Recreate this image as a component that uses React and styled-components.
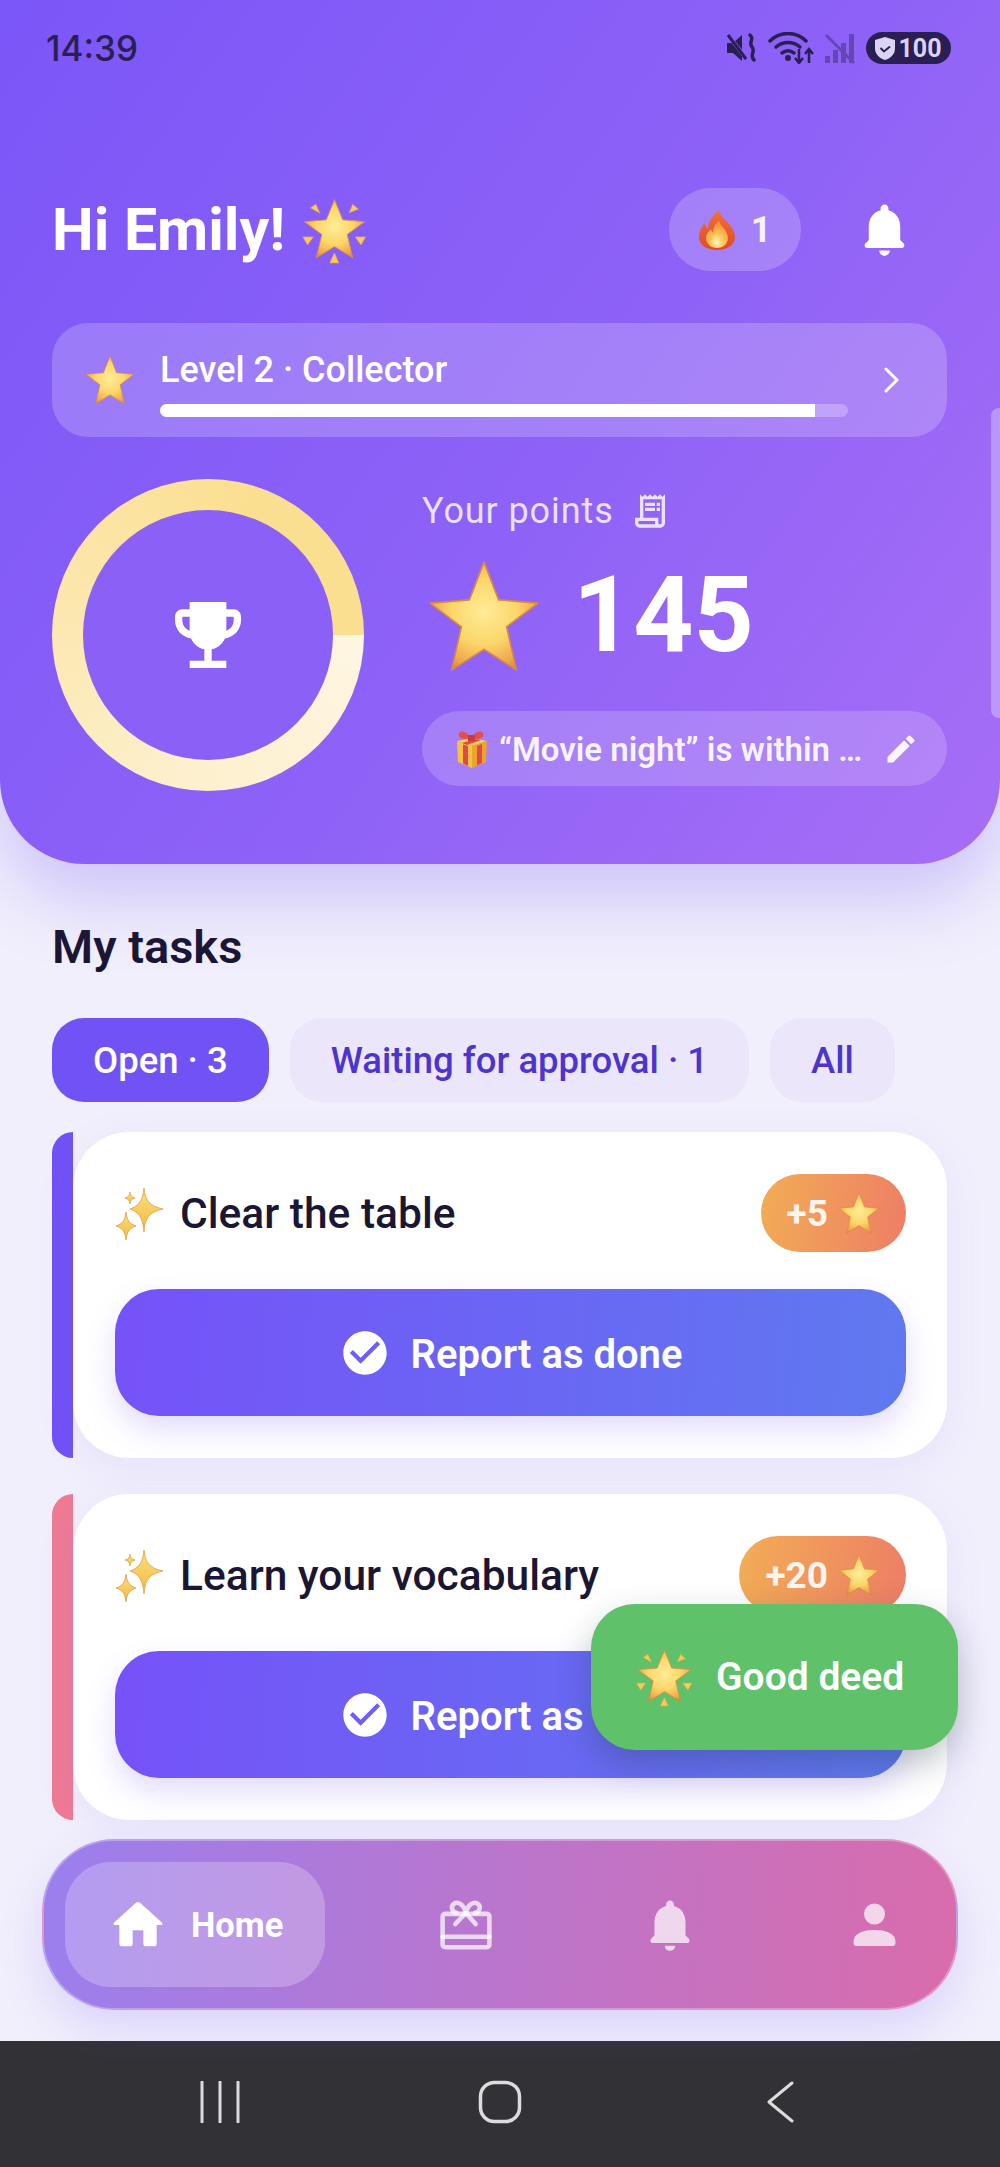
import React from "react";
import styled, { createGlobalStyle } from "styled-components";

const GlobalStyle = createGlobalStyle`
  html, body {
    margin: 0;
    padding: 0;
    overflow: hidden;
    background: #f1effc;
    font-family: Roboto, "Liberation Sans", sans-serif;
  }
  * { box-sizing: border-box; }
`;

const STAR_POINTS = "50,0 63.6,35 100,38 71,60 80,100 50,81 20,100 29,60 0,38 36.4,35";

// emoji are not available as a font here, so they are small drawings
const EmojiDefs = () => (
  <DefsHolder aria-hidden="true">
    <defs>
      <radialGradient id="starFill" cx="50%" cy="46%" r="60%">
        <stop offset="0%" stopColor="#ffec96" />
        <stop offset="50%" stopColor="#fbd76c" />
        <stop offset="85%" stopColor="#eda748" />
        <stop offset="100%" stopColor="#d9823a" />
      </radialGradient>
      <linearGradient id="fireOuter" x1="0" y1="0" x2="0" y2="1">
        <stop offset="0%" stopColor="#f0703a" />
        <stop offset="100%" stopColor="#e04a26" />
      </linearGradient>
      <radialGradient id="fireInner" cx="50%" cy="78%" r="62%">
        <stop offset="0%" stopColor="#fff6c8" />
        <stop offset="45%" stopColor="#fdc95a" />
        <stop offset="100%" stopColor="#f79a3a" />
      </radialGradient>
      <linearGradient id="sparkFill" x1="0" y1="0" x2="0" y2="1">
        <stop offset="0%" stopColor="#fde07a" />
        <stop offset="100%" stopColor="#f0b848" />
      </linearGradient>
    </defs>
  </DefsHolder>
);

const Star = ({ size, height }) => (
  <svg width={size} height={height || size} viewBox="-2 -2 104 104">
    <polygon points={STAR_POINTS} fill="url(#starFill)" stroke="#d98a3e" strokeWidth="1.500" strokeLinejoin="round" />
  </svg>
);

const GlowStar = ({ size }) => (
  <svg width={size} height={size} viewBox="38 42 196 196">
    <g transform="translate(50 52) scale(1.75 1.68)">
      <polygon points={STAR_POINTS} fill="url(#starFill)" stroke="#d98a3e" strokeWidth="1.500" strokeLinejoin="round" />
    </g>
    <g fill="#f8c95c" stroke="#e8a545" strokeWidth="2" strokeLinejoin="round">
      <polygon points="68,76 84,66 95,92" />
      <polygon points="180,90 190,66 206,80" />
      <polygon points="46,160 76,160 60,183" />
      <polygon points="197,160 227,160 214,183" />
      <polygon points="137,206 150,235 124,235" />
    </g>
  </svg>
);

const Fire = () => (
  <svg width="36" height="40" viewBox="0 0 36 40">
    <path d="M20 0c1 6 6 9 10 14 4 5 6 9 6 13 0 8-8 13-18 13S0 35 0 27c0-6 3-11 6-14 0 3 1 5 3 6 0-8 5-14 11-19z" fill="url(#fireOuter)" />
    <path d="M20 11c1 5 9 9 9 17 0 6-5 10-11 10S7 34 7 28c0-4 3-7 5-9 0 2 1 3 2 3 0-5 3-8 6-11z" fill="url(#fireInner)" />
  </svg>
);

const Sparkles = () => (
  <svg width="48" height="56" viewBox="0 0 48 56">
    <g fill="url(#sparkFill)" stroke="#dca040" strokeWidth="0.8" strokeLinejoin="round">
      <path d="M29 3c1 12 5 18 19 21-14 3-18 9-19 23-1-14-5-20-14-23 9-3 13-9 14-21z" />
      <path d="M11 27c1 9 4 12 10 14-6 2-9 5-10 14-1-9-4-12-10-14 6-2 9-5 10-14z" />
      <path d="M15 7c.5 4 2 5 5 6-3 1-4.500 2-5 6-.5-4-2-5-5-6 3-1 4.500-2 5-6z" />
    </g>
  </svg>
);

const Gift = () => (
  <svg width="36" height="38" viewBox="0 0 36 38">
    <path d="M17 8C13 1 7 0 5 3c-2 3 2 7 12 7 10 0 14-4 12-7-2-3-8-2-12 5z" fill="#e0504c" />
    <path d="M3 11l15-3 15 3-15 5z" fill="#f7cf55" />
    <path d="M3 11l15 5v22L4 32z" fill="#f7c244" />
    <path d="M33 11l-15 5v22l14-6z" fill="#eba52e" />
    <path d="M8 13l14-4 5 1-14 5zM9 14.500l5 1.500v20l-5-2.500zM23 16l5-2v19l-5 2.500z" fill="#dd4b46" />
    <path d="M14 5h7v6h-7z" fill="#c93a3a" />
  </svg>
);

const Icon = ({ d, size, fill = "currentColor" }) => (
  <svg width={size} height={size} viewBox="0 0 24 24" fill={fill}>
    <path d={d} />
  </svg>
);

const BELL = "M12 22c1.1 0 2-.9 2-2h-4c0 1.1.9 2 2 2zm6-6v-5c0-3.07-1.630-5.640-4.500-6.320V4c0-.83-.67-1.500-1.500-1.500s-1.500.67-1.500 1.500v.68C7.640 5.360 6 7.920 6 11v5l-1.290 1.290c-.63.63-.19 1.710.7 1.710h13.170c.89 0 1.340-1.080.71-1.710L18 16z";
const TROPHY = "M19 5h-2V3H7v2H5c-1.100 0-2 .9-2 2v1c0 2.550 1.920 4.630 4.390 4.940.63 1.500 1.980 2.630 3.610 2.960V19H7v2h10v-2h-4v-3.100c1.630-.33 2.980-1.460 3.610-2.960C19.080 12.630 21 10.550 21 8V7c0-1.100-.9-2-2-2zM5 8V7h2v3.820C5.840 10.400 5 9.300 5 8zm14 0c0 1.300-.84 2.400-2 2.820V7h2v1z";
const RECEIPT = "M19.500 3.500 18 2l-1.500 1.500L15 2l-1.500 1.500L12 2l-1.500 1.500L9 2 7.500 3.500 6 2v14H3v3c0 1.660 1.340 3 3 3h12c1.660 0 3-1.340 3-3V2l-1.500 1.500zM15 20H6c-.55 0-1-.45-1-1v-1h10v2zm4-1c0 .55-.45 1-1 1s-1-.45-1-1v-3H8V5h11v14zM9 7h6v2H9zM16 7h2v2h-2zM9 10h6v2H9zM16 10h2v2h-2z";
const EDIT = "M3 17.250V21h3.750L17.810 9.940l-3.750-3.750L3 17.250zM20.710 7.040c.39-.39.39-1.020 0-1.410l-2.340-2.340a.996.996 0 0 0-1.410 0l-1.830 1.830 3.750 3.750 1.830-1.830z";
const CHECK = "M12 2C6.480 2 2 6.480 2 12s4.480 10 10 10 10-4.480 10-10S17.520 2 12 2zm-2 15-5-5 1.410-1.410L10 14.170l7.590-7.590L19 8l-9 9z";
const HOME = "M10 19v-5h4v5c0 .55.45 1 1 1h3c.55 0 1-.45 1-1v-7h1.700c.46 0 .68-.57.33-.87L12.670 3.600c-.38-.34-.96-.34-1.340 0l-8.360 7.530c-.34.3-.13.87.33.87H5v7c0 .55.45 1 1 1h3c.55 0 1-.45 1-1z";

const tasks = [
  { title: "Clear the table", points: "+5", color: "#7152f5" },
  { title: "Learn your vocabulary", points: "+20", color: "#ee7a95" },
];

const App = () => {
  return (
    <Page>
      <GlobalStyle />
      <EmojiDefs />
      <Hero>
        <StatusBar>
          <Clock>14:39</Clock>
          <StatusIcons>
            <svg width="32" height="30" viewBox="0 0 32 30">
              <path d="M1 10h6l9-8v26l-9-8H1z" fill="#2a1f52" />
              <path d="M2 2l20 26" stroke="#8a60f8" strokeWidth="4" />
              <path d="M2 2l18 24" stroke="#2a1f52" strokeWidth="3" />
              <path d="M24 2c5 4-2 7 2 12s-3 8 2 13" stroke="#2a1f52" strokeWidth="3.500" fill="none" strokeLinecap="round" />
            </svg>
            <svg width="46" height="32" viewBox="0 0 46 32">
              <g fill="none" stroke="#2a1f52" strokeWidth="3.500" strokeLinecap="round">
                <path d="M2 9c10-10 26-10 36 0" />
                <path d="M8 15c7-6 17-6 24 0" />
                <path d="M14 21c4-3 8-3 12 0" />
              </g>
              <circle cx="20" cy="26" r="3" fill="#2a1f52" />
              <path d="M31 17v13m-4-4 4 5 4-5M41 31V18m-4 4 4-5 4 5" fill="none" stroke="#2a1f52" strokeWidth="2.500" />
            </svg>
            <svg width="31" height="31" viewBox="0 0 31 31" opacity="0.4">
              <g fill="#2a1f52">
                <rect x="1" y="23" width="5" height="7" />
                <rect x="9" y="17" width="5" height="13" />
                <rect x="17" y="10" width="5" height="20" />
                <rect x="25" y="1" width="5" height="29" />
              </g>
              <path d="M2 2l28 28" stroke="#2a1f52" strokeWidth="3" />
            </svg>
            <Battery>
              <svg width="20" height="23" viewBox="0 0 20 23">
                <path d="M10 0l10 3v8c0 6-4 10-10 12C4 21 0 17 0 11V3z" fill="#dcd4f5" />
                <path d="M5.500 11l3.500 3.500 6-5" fill="none" stroke="#2a1f52" strokeWidth="2" />
              </svg>
              100
            </Battery>
          </StatusIcons>
        </StatusBar>

        <Greeting>
          <GreetingTitle>
            Hi Emily!
            <GlowStar size={68} />
          </GreetingTitle>
          <GreetingActions>
            <StreakPill>
              <Fire />
              1
            </StreakPill>
            <HeroBell><Icon d={BELL} size={63} /></HeroBell>
          </GreetingActions>
        </Greeting>

        <LevelCard>
          <Star size={50} height={52} />
          <LevelInfo>
            <LevelName>Level 2 · Collector</LevelName>
            <LevelTrack>
              <LevelFill style={{ width: `${(655 / 688) * 100}%` }} />
            </LevelTrack>
          </LevelInfo>
          <svg width="16" height="26" viewBox="0 0 16 26">
            <path d="M3 2l11 11L3 24" fill="none" stroke="#fff" strokeWidth="3" strokeLinecap="round" strokeLinejoin="round" />
          </svg>
        </LevelCard>

        <PointsRow>
          <Ring>
            <RingHole><Icon d={TROPHY} size={88} /></RingHole>
          </Ring>
          <PointsColumn>
            <PointsLabel>
              Your points
              <Icon d={RECEIPT} size={40} />
            </PointsLabel>
            <PointsValue>
              <Star size={116} height={112} />
              <PointsNumber>145</PointsNumber>
            </PointsValue>
            <GoalPill>
              <Gift />
              <GoalText>“Movie night” is within …</GoalText>
              <Icon d={EDIT} size={36} />
            </GoalPill>
          </PointsColumn>
        </PointsRow>
      </Hero>

      <Main>
        <SectionTitle>My tasks</SectionTitle>
        <Tabs>
          <Tab $active>Open · 3</Tab>
          <Tab>Waiting for approval · 1</Tab>
          <Tab>All</Tab>
        </Tabs>
        <TaskList>
          {tasks.map((task) => (
            <TaskCard key={task.title}>
              <Stripe $color={task.color} />
              <TaskBody>
                <TaskHead>
                  <TaskTitle>
                    <Sparkles />
                    {task.title}
                  </TaskTitle>
                  <Reward>
                    {task.points}
                    <Star size={42} />
                  </Reward>
                </TaskHead>
                <ReportButton>
                  <Icon d={CHECK} size={52} />
                  <ReportLabel>Report as done</ReportLabel>
                </ReportButton>
              </TaskBody>
            </TaskCard>
          ))}
        </TaskList>
      </Main>

      <Scrollbar />

      <GoodDeed>
        <GlowStar size={60} />
        Good deed
      </GoodDeed>

      <BottomNav>
        <NavActive>
          <Icon d={HOME} size={64} />
          Home
        </NavActive>
        <NavItems>
          <NavItem>
            <svg width="54" height="52" viewBox="55 50 165 158">
              <g fill="none" stroke="currentColor" strokeWidth="14" strokeLinejoin="round" strokeLinecap="round">
                <rect x="66" y="95" width="143" height="102" rx="8" />
                <path d="M66 165h143" />
                <path d="M137 92l-32 34M137 92l30 34" />
                <path d="M137 92c-6-26-24-36-36-28-12 8-6 26 8 28M137 92c6-26 24-36 36-28 12 8 6 26-8 28" />
              </g>
            </svg>
          </NavItem>
          <NavItem><Icon d={BELL} size={62} /></NavItem>
          <NavItem>
            <svg width="43" height="44" viewBox="0 0 42 44" fill="currentColor">
              <circle cx="21" cy="11" r="10.500" />
              <path d="M0 39C0 30 10 27 21 27s21 3 21 12c0 3-1 4-3 4H3c-2 0-3-1-3-4z" />
            </svg>
          </NavItem>
        </NavItems>
      </BottomNav>

      <SystemBar>
        <svg width="40" height="42" viewBox="0 0 40 42">
          <path d="M2 1v40M20 1v40M38 1v40" stroke="#dcdcde" strokeWidth="3" strokeLinecap="round" />
        </svg>
        <svg width="44" height="44" viewBox="0 0 44 44">
          <rect x="2.500" y="2.500" width="39" height="39" rx="14" fill="none" stroke="#dcdcde" strokeWidth="3.500" />
        </svg>
        <svg width="28" height="42" viewBox="0 0 28 42">
          <path d="M26 2L3 21l23 19" fill="none" stroke="#dcdcde" strokeWidth="3" strokeLinecap="round" strokeLinejoin="round" />
        </svg>
      </SystemBar>
    </Page>
  );
};

const DefsHolder = styled.svg`
  position: absolute;
  width: 0;
  height: 0;
`;

const Page = styled.div`
  position: relative;
  width: 1000px;
  height: 2167px;
  display: flex;
  flex-direction: column;
  overflow: hidden;
  background: #f1effc;
`;

const Hero = styled.header`
  position: relative;
  z-index: 1;
  flex: none;
  height: 864px;
  padding: 0 53px 0 52px;
  border-radius: 0 0 84px 84px;
  background: linear-gradient(125deg, #7b56f8 0%, #8e62f7 55%, #a76ef6 100%);
  box-shadow: 0 34px 70px rgba(113, 82, 245, 0.28);
`;

const StatusBar = styled.div`
  height: 96px;
  margin-right: -4px;
  margin-left: -6px;
  display: flex;
  align-items: center;
  justify-content: space-between;
`;

const Clock = styled.span`
  font-family: Inter, Roboto, sans-serif;
  font-size: 35px;
  font-weight: 500;
  color: #2a1f52;
`;

const StatusIcons = styled.div`
  display: flex;
  align-items: center;
  gap: 10px;
`;

const Battery = styled.div`
  width: 85px;
  height: 32px;
  margin-left: 1px;
  border-radius: 16px;
  background: #2a1f52;
  color: #dcd4f5;
  display: flex;
  align-items: center;
  justify-content: center;
  gap: 3px;
  font-size: 25px;
  font-weight: 700;
`;

const Greeting = styled.div`
  margin-top: 92px;
  height: 83px;
  display: flex;
  align-items: center;
  justify-content: space-between;
`;

const GreetingTitle = styled.h1`
  margin: 0;
  display: flex;
  align-items: center;
  gap: 15px;
  font-size: 59px;
  font-weight: 700;
  color: #fff;
`;

const GreetingActions = styled.div`
  display: flex;
  align-items: center;
  gap: 52px;
`;

const StreakPill = styled.div`
  width: 132px;
  height: 83px;
  border-radius: 42px;
  background: rgba(255, 255, 255, 0.2);
  display: flex;
  align-items: center;
  justify-content: center;
  gap: 16px;
  font-size: 36px;
  font-weight: 700;
  color: rgba(255, 255, 255, 0.92);
`;

const HeroBell = styled.div`
  display: flex;
  margin-right: 31px;
  color: #fff;
`;

const LevelCard = styled.div`
  margin-top: 52px;
  height: 114px;
  padding: 0 44px 0 33px;
  border-radius: 36px;
  background: rgba(255, 255, 255, 0.2);
  display: flex;
  align-items: center;
`;

const LevelInfo = styled.div`
  width: 688px;
  margin-left: 25px;
  margin-right: 35px;
  padding-top: 6px;
`;

const LevelName = styled.div`
  font-size: 36px;
  line-height: 40px;
  font-weight: 500;
  color: #fff;
`;

const LevelTrack = styled.div`
  height: 13px;
  margin-top: 14px;
  border-radius: 7px;
  background: rgba(255, 255, 255, 0.25);
  overflow: hidden;
`;

const LevelFill = styled.div`
  height: 100%;
  background: #fff;
`;

const PointsRow = styled.div`
  margin-top: 42px;
  display: flex;
  gap: 58px;
`;

const Ring = styled.div`
  flex: none;
  width: 312px;
  height: 312px;
  padding: 31px;
  border-radius: 50%;
  background: conic-gradient(from 90deg, #fff6e2 0deg, #fdefcb 110deg, #fce6ab 200deg, #fbdf90 290deg, #fbdf90 360deg);
`;

const RingHole = styled.div`
  width: 100%;
  height: 100%;
  border-radius: 50%;
  background: #8a60f7;
  color: #fff;
  display: flex;
  align-items: center;
  justify-content: center;
`;

const PointsColumn = styled.div`
  flex: 1;
  min-width: 0;
  padding-top: 10px;
`;

const PointsLabel = styled.div`
  height: 44px;
  display: flex;
  align-items: center;
  gap: 16px;
  font-size: 36px;
  letter-spacing: 0.9px;
  color: rgba(255, 255, 255, 0.82);
`;

const PointsValue = styled.div`
  margin-top: 27px;
  margin-left: 4px;
  height: 112px;
  display: flex;
  align-items: center;
  gap: 31px;
`;

const PointsNumber = styled.div`
  font-size: 105px;
  line-height: 110px;
  font-weight: 700;
  color: #fff;
`;

const GoalPill = styled.div`
  margin-top: 39px;
  height: 75px;
  padding: 0 28px 0 32px;
  border-radius: 38px;
  background: rgba(255, 255, 255, 0.18);
  display: flex;
  align-items: center;
  gap: 9px;
  color: rgba(255, 255, 255, 0.92);
`;

const GoalText = styled.span`
  flex: 1;
  min-width: 0;
  padding-top: 2px;
  font-size: 33px;
  font-weight: 600;
  white-space: nowrap;
`;

const Main = styled.main`
  flex: 1;
  min-height: 0;
  padding: 57px 53px 0 52px;
  overflow: hidden;
`;

const SectionTitle = styled.h2`
  margin: 0;
  font-size: 47px;
  line-height: 52px;
  font-weight: 600;
  color: #1a1633;
`;

const Tabs = styled.div`
  margin-top: 45px;
  display: flex;
  gap: 21px;
`;

const Tab = styled.div`
  height: 84px;
  padding: 0 41px;
  border-radius: 32px;
  background: ${(props) => (props.$active ? "#7152f5" : "#ece6fb")};
  color: ${(props) => (props.$active ? "#fff" : "#4c35cf")};
  display: flex;
  align-items: center;
  font-size: 36.5px;
  font-weight: 500;
`;

const TaskList = styled.div`
  margin-top: 30px;
  display: flex;
  flex-direction: column;
  gap: 36px;
`;

const TaskCard = styled.article`
  height: 326px;
  display: flex;
`;

const Stripe = styled.div`
  flex: none;
  width: 21px;
  border-radius: 24px 0 0 24px;
  background: ${(props) => props.$color};
`;

const TaskBody = styled.div`
  flex: 1;
  min-width: 0;
  padding: 42px 41px 42px 42px;
  border-radius: 56px;
  background: #fff;
  box-shadow: 0 10px 40px rgba(113, 82, 245, 0.08);
`;

const TaskHead = styled.div`
  height: 78px;
  display: flex;
  align-items: center;
  justify-content: space-between;
`;

const TaskTitle = styled.div`
  display: flex;
  align-items: center;
  gap: 17px;
  font-size: 42.5px;
  font-weight: 500;
  color: #1a1633;
`;

const Reward = styled.div`
  height: 78px;
  padding: 0 26px 0 26px;
  border-radius: 39px;
  background: linear-gradient(100deg, #f2ad55 0%, #ee7d66 100%);
  display: flex;
  align-items: center;
  gap: 10px;
  font-size: 37px;
  font-weight: 700;
  color: rgba(255, 255, 255, 0.92);
`;

const ReportButton = styled.div`
  margin-top: 37px;
  height: 127px;
  border-radius: 44px;
  background: linear-gradient(95deg, #7652f8 0%, #5f79f0 100%);
  box-shadow: 0 14px 30px rgba(113, 82, 245, 0.2);
  display: flex;
  align-items: center;
  justify-content: center;
  gap: 20px;
  font-size: 40px;
  font-weight: 600;
  color: #fff;
`;

const ReportLabel = styled.span`
  padding-top: 3px;
`;

const Scrollbar = styled.div`
  position: absolute;
  z-index: 2;
  top: 408px;
  right: 0;
  width: 9px;
  height: 310px;
  border-radius: 8px 0 0 8px;
  background: rgba(255, 255, 255, 0.3);
`;

const GoodDeed = styled.div`
  position: absolute;
  z-index: 3;
  right: 42px;
  bottom: 417px;
  width: 367px;
  height: 146px;
  padding-left: 43px;
  border-radius: 44px;
  background: #5fc26b;
  box-shadow: 0 14px 34px rgba(30, 50, 60, 0.28);
  display: flex;
  align-items: center;
  gap: 22px;
  font-size: 39px;
  font-weight: 600;
  color: #fff;
`;

const BottomNav = styled.nav`
  position: absolute;
  z-index: 3;
  left: 42px;
  bottom: 157px;
  width: 916px;
  height: 171px;
  padding: 0 38px 0 21px;
  border: 2px solid rgba(255, 255, 255, 0.28);
  border-radius: 72px;
  background: linear-gradient(95deg, #9b7fee 0%, #d96cab 100%);
  box-shadow: 0 20px 44px rgba(113, 82, 245, 0.16);
  display: flex;
  align-items: center;
`;

const NavActive = styled.div`
  flex: none;
  width: 260px;
  height: 125px;
  margin-right: 97px;
  padding-left: 41px;
  border-radius: 46px;
  background: rgba(255, 255, 255, 0.24);
  display: flex;
  align-items: center;
  gap: 21px;
  font-size: 34.5px;
  font-weight: 700;
  color: #fff;
`;

const NavItems = styled.div`
  flex: 1;
  display: flex;
  align-items: center;
  justify-content: space-between;
`;

const NavItem = styled.div`
  width: 88px;
  display: flex;
  justify-content: center;
  color: rgba(255, 255, 255, 0.72);
`;

const SystemBar = styled.div`
  flex: none;
  height: 126px;
  padding-bottom: 4px;
  background: #323236;
  display: grid;
  grid-template-columns: repeat(3, 280px);
  justify-content: center;
  justify-items: center;
  align-items: center;
`;

export default App;
